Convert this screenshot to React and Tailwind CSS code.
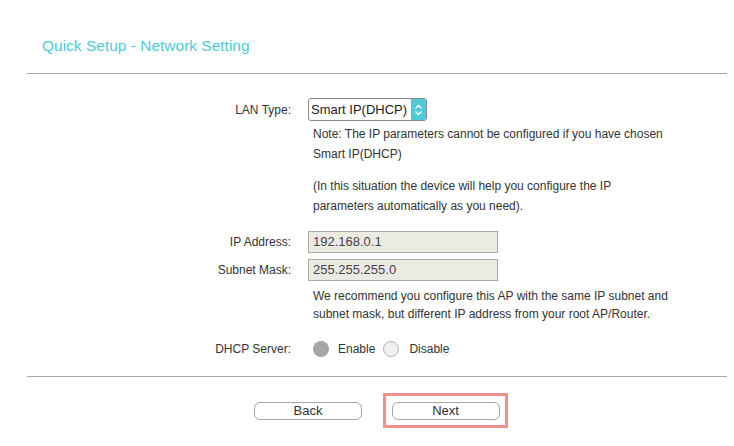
import React from 'react';

function Row({ label, children, className = '' }) {
    return (
        <div className={`flex items-center ${className}`}>
            <div className="w-[265px] pr-[1px] text-right">{label}</div>
            <div className="ml-[16px] flex items-center">{children}</div>
        </div>
    );
}

export default function App() {
    return (
        <div className="h-[446px] w-[734px] bg-white text-[12px] text-[#333] font-['Liberation_Sans',Arial,sans-serif]">
            <div className="ml-[27px] w-[700px]">
                <div className="h-[74px] border-b border-[#a8a8a8] pl-[15px] pt-[36px] text-[15.5px] leading-[20px] text-[#4ccbd6]">
                    Quick Setup - Network Setting
                </div>

                <Row label="LAN Type:" className="mt-[24px] h-[23px]">
                    <div className="flex h-[23px] w-[119px] items-center rounded-[3px] border border-[#8a8a8a] bg-white">
                        <span className="flex-1 pl-[2px] text-[13px] text-[#222]">Smart IP(DHCP)</span>
                        <span className="flex h-[21px] w-[15px] items-center justify-center rounded-r-[2px] bg-[#4ecbd7]">
                            <svg width="9" height="14" viewBox="0 0 9 14" fill="none" stroke="white" strokeWidth="1.4">
                                <path d="M1.5 5.5 L4.5 2.5 L7.5 5.5" />
                                <path d="M1.5 8.5 L4.5 11.5 L7.5 8.5" />
                            </svg>
                        </span>
                    </div>
                </Row>

                <div className="ml-[286px] mt-[3px] leading-[20px]">
                    <p>Note: The IP parameters cannot be configured if you have chosen<br />Smart IP(DHCP)</p>
                    <p className="mt-[12px]">(In this situation the device will help you configure the IP<br />parameters automatically as you need).</p>
                </div>

                <Row label="IP Address:" className="mt-[15px] h-[22px]">
                    <div className="flex h-[22px] w-[190px] items-center border border-[#a9a9a9] bg-[#ebebe4] pl-[4px] text-[13px] text-[#444]">192.168.0.1</div>
                </Row>
                <Row label="Subnet Mask:" className="mt-[6px] h-[22px]">
                    <div className="flex h-[22px] w-[190px] items-center border border-[#a9a9a9] bg-[#ebebe4] pl-[4px] text-[13px] text-[#444]">255.255.255.0</div>
                </Row>

                <div className="ml-[286px] mt-[6px] leading-[18px]">
                    <p>We recommend you configure this AP with the same IP subnet and<br />subnet mask, but different IP address from your root AP/Router.</p>
                </div>

                <Row label="DHCP Server:" className="mt-[16px] h-[20px]">
                    <div className="flex items-center pl-[5px]">
                        <span className="h-[16px] w-[16px] rounded-full bg-[#a6a6a8]"></span>
                        <span className="ml-[9px]">Enable</span>
                        <span className="ml-[8px] h-[16px] w-[16px] rounded-full border border-[#b5b5b5] bg-[#f0f0f0]"></span>
                        <span className="ml-[10px]">Disable</span>
                    </div>
                </Row>

                <div className="mt-[17px] border-b border-[#a8a8a8]"></div>

                <div className="mt-[16px] flex items-center">
                    <button className="ml-[227px] h-[18px] w-[108px] rounded-[6px] border border-[#a6a6a6] bg-white text-[13px] leading-[16px] text-[#333]">Back</button>
                    <div className="ml-[21px] flex h-[35px] w-[125px] items-center justify-center border-[3px] border-[#f39090]">
                        <button className="h-[18px] w-[108px] rounded-[6px] border border-[#a6a6a6] bg-white text-[13px] leading-[16px] text-[#333]">Next</button>
                    </div>
                </div>
            </div>
        </div>
    );
}
